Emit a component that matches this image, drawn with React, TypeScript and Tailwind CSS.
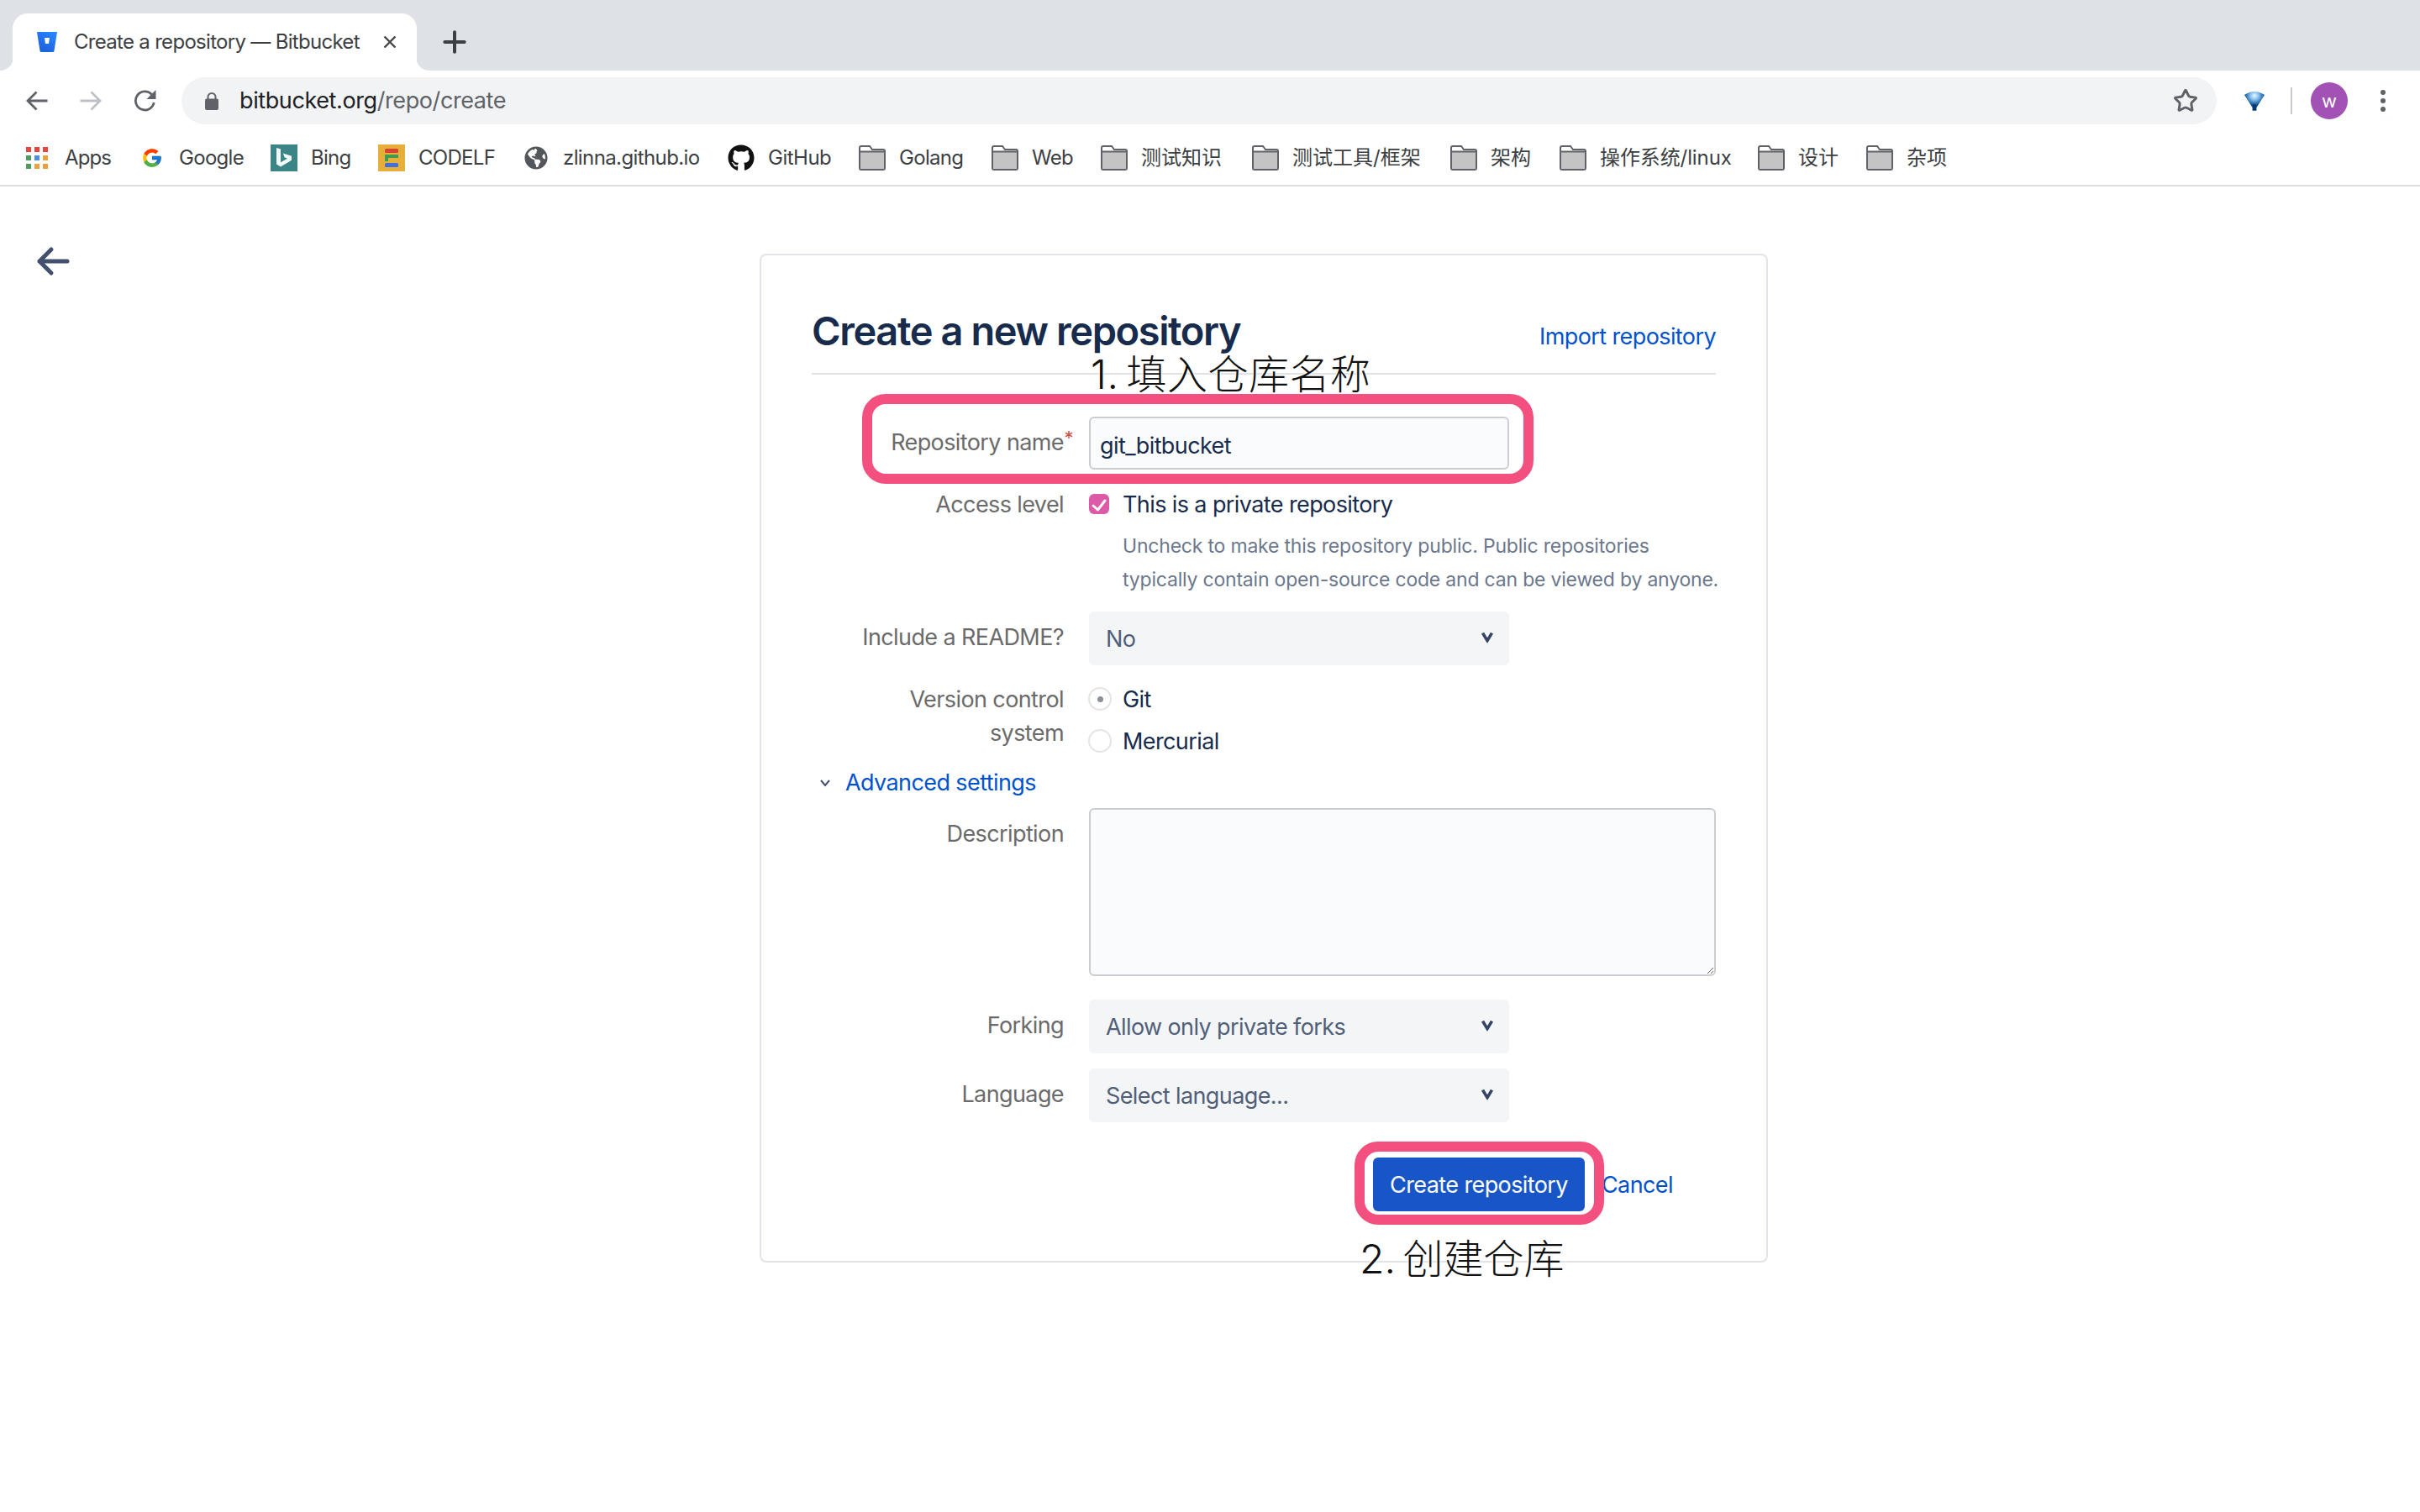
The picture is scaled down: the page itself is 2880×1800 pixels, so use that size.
import React from "react";
import { Star, Plus } from "lucide-react";
import { FcGoogle } from "react-icons/fc";
import { FaGithub, FaGlobeAmericas } from "react-icons/fa";

const Arrow = ({ color, flip }: { color: string; flip?: boolean }) => (
  <svg width="26" height="26" viewBox="0 0 26 26" className={flip ? "-scale-x-100 shrink-0" : "shrink-0"}>
    <path d="M25.5 13H2.5M12.5 2.5L2 13l10.5 10.5" fill="none" stroke={color} strokeWidth="2.8" />
  </svg>
);

const Reload = () => (
  <svg width="27" height="26" viewBox="0 0 27 26" className="shrink-0">
    <path d="M21.5 5.5A11 11 0 1 0 24.2 15" fill="none" stroke="#5f6368" strokeWidth="2.8" />
    <path d="M26.5 0v11h-11z" fill="#5f6368" />
  </svg>
);

const LockIcon = () => (
  <svg width="16" height="21" viewBox="0 0 16 21" className="shrink-0">
    <path d="M3.5 9V5.5a4.5 4.5 0 0 1 9 0V9" fill="none" stroke="#5f6368" strokeWidth="2" />
    <rect x="0" y="7.5" width="16" height="13.5" rx="2" fill="#5f6368" />
  </svg>
);

const Folder = () => (
  <svg width="32" height="30" viewBox="0 0 32 30" className="shrink-0">
    <path d="M1 27V3a2 2 0 0 1 2-2h10l3 4h13a2 2 0 0 1 2 2v20a2 2 0 0 1-2 2H3a2 2 0 0 1-2-2z" fill="#fff" stroke="#5f6368" strokeWidth="2" />
    <rect x="2" y="8" width="28" height="20" fill="#c4c4c4" />
    <path d="M2 7.5h28" stroke="#5f6368" strokeWidth="2" />
  </svg>
);

const AppsIcon = () => (
  <svg width="26" height="26" viewBox="0 0 26 26" className="shrink-0">
    {["#e8453c", "#e8453c", "#e8453c", "#4f9b5f", "#4a8fee", "#e9a23b", "#4f9b5f", "#e9a23b", "#e9a23b"].map((c, i) => (
      <rect key={i} x={(i % 3) * 10} y={Math.floor(i / 3) * 10} width="6" height="6" fill={c} />
    ))}
  </svg>
);

const BingIcon = () => (
  <svg width="32" height="32" viewBox="0 0 32 32" className="shrink-0">
    <rect width="32" height="32" fill="#3b8587" />
    <path d="M7 4l5 1.6v15.6l8-4.4-3.4-1.6-1.8-4.6L25 13.8v5L12 26.5l-5-3z" fill="#f2fbf9" />
  </svg>
);

const CodelfIcon = () => (
  <svg width="32" height="32" viewBox="0 0 32 32" className="shrink-0">
    <rect width="32" height="32" fill="#e8ae3a" />
    <rect x="8" y="5" width="16" height="5" rx="1.5" fill="#d8432f" />
    <path d="M8 12h16v4H12v4H8z" fill="#3f9b4f" />
    <rect x="8" y="22" width="16" height="5" rx="1.5" fill="#3f72d8" />
  </svg>
);

const bookmarks: { label: string; icon: React.ReactNode; cls: string }[] = [
  { label: "Apps", icon: <AppsIcon />, cls: "w-[137px] gap-[20px] tracking-[-0.9px]" },
  { label: "Google", icon: <FcGoogle size={26} className="shrink-0" />, cls: "w-[154px] gap-[19px] tracking-[-0.7px]" },
  { label: "Bing", icon: <BingIcon />, cls: "w-[128px] gap-[16px] tracking-[-0.7px]" },
  { label: "CODELF", icon: <CodelfIcon />, cls: "w-[174px] gap-[16px] tracking-[-0.7px]" },
  { label: "zlinna.github.io", icon: <FaGlobeAmericas size={28} color="#53575c" className="shrink-0" />, cls: "w-[242px] gap-[18px] tracking-[-0.6px]" },
  { label: "GitHub", icon: <FaGithub size={32} color="#111" className="shrink-0" />, cls: "w-[156px] gap-[16px] tracking-[-0.5px]" },
  { label: "Golang", icon: <Folder />, cls: "w-[158px] gap-[16px] tracking-[-0.7px]" },
  { label: "Web", icon: <Folder />, cls: "w-[130px] gap-[16px] tracking-[-0.7px]" },
  { label: "测试知识", icon: <Folder />, cls: "w-[180px] gap-[16px]" },
  { label: "测试工具/框架", icon: <Folder />, cls: "w-[236px] gap-[16px]" },
  { label: "架构", icon: <Folder />, cls: "w-[130px] gap-[16px]" },
  { label: "操作系统/linux", icon: <Folder />, cls: "w-[236px] gap-[16px] tracking-[-0.1px]" },
  { label: "设计", icon: <Folder />, cls: "w-[129px] gap-[16px]" },
  { label: "杂项", icon: <Folder />, cls: "w-[129px] gap-[16px]" },
];

const Chevron = () => (
  <svg width="16" height="14" viewBox="0 0 16 14" className="absolute right-[18px] top-1/2 -translate-y-[60%] pointer-events-none">
    <path d="M2.5 2l5.5 9 5.5-9" fill="none" stroke="#344563" strokeWidth="3.6" />
  </svg>
);

const Select = ({ value }: { value: string }) => (
  <div className="relative w-[500px] h-[64px]">
    <select
      defaultValue={value}
      className="appearance-none w-full h-full rounded-[6px] bg-[#f4f5f7] pl-[20px] pt-[2px] text-[27px] tracking-[-0.6px] text-[#505f79] outline-none"
    >
      <option>{value}</option>
    </select>
    <Chevron />
  </div>
);

const Label = ({ children, pt }: { children: React.ReactNode; pt: string }) => (
  <div className={`w-[300px] shrink-0 text-right text-[27px] leading-[40px] tracking-[-0.6px] text-[#6b6b6b] ${pt}`}>{children}</div>
);

const Radio = ({ on, label }: { on?: boolean; label: string }) => (
  <div className="flex items-center h-[40px]">
    <span className="w-[28px] h-[28px] -ml-[1px] rounded-full border-2 border-[#e4e5e8] bg-white flex items-center justify-center shrink-0">
      {on && <span className="w-[7px] h-[7px] rounded-full bg-[#8a8f98]" />}
    </span>
    <span className="ml-[13px] pt-[2px] text-[27px] tracking-[-0.6px] text-[#172b4d]">{label}</span>
  </div>
);

export default function App() {
  return (
    <div className="w-[2880px] h-[1800px] bg-white overflow-hidden font-['Inter','Noto_Sans_CJK_SC',sans-serif]">
      {/* tab strip */}
      <div className="h-[84px] bg-[#dee1e6] pl-[15px] pt-[16px] flex">
        <div className="relative w-[481px] h-[68px] bg-white rounded-t-[18px] flex items-center pl-[28px] pb-[1px]">
          <svg width="26" height="26" viewBox="0 0 26 26" className="shrink-0">
            <defs>
              <linearGradient id="bb" x1="1" y1="0.2" x2="0.5" y2="1">
                <stop offset="0" stopColor="#2684ff" />
                <stop offset="1" stopColor="#1e62dc" />
              </linearGradient>
            </defs>
            <path d="M1 1h24l-3.6 23a1.5 1.5 0 0 1-1.5 1H6.1a1.5 1.5 0 0 1-1.5-1z" fill="url(#bb)" />
            <path d="M10 8h6l-1 7h-4z" fill="#fff" />
          </svg>
          <span className="ml-[19px] w-[346px] text-[24px] tracking-[-0.7px] text-[#3c4043] whitespace-nowrap">Create a repository — Bitbucket</span>
          <svg width="16" height="14" viewBox="0 0 16 14" className="ml-[22px] shrink-0">
            <path d="M1.5 0.5l13 13M14.5 0.5l-13 13" fill="none" stroke="#45484d" strokeWidth="2.4" />
          </svg>
          <svg width="16" height="16" viewBox="0 0 16 16" className="absolute -left-[15px] bottom-0">
            <path d="M16 0v16H0a16 16 0 0 0 16-16z" fill="#fff" />
          </svg>
          <svg width="16" height="16" viewBox="0 0 16 16" className="absolute -right-[15px] bottom-0">
            <path d="M0 0v16h16A16 16 0 0 1 0 0z" fill="#fff" />
          </svg>
        </div>
        <Plus size={40} strokeWidth={2.4} color="#3c4043" className="ml-[25px] mt-[14px]" />
      </div>

      {/* toolbar */}
      <div className="h-[72px] flex items-start pt-[8px] bg-white">
        <div className="flex items-center h-[56px] w-[216px] shrink-0 pl-[31px] gap-[38px]">
          <Arrow color="#5f6368" />
          <Arrow color="#bdc1c6" flip />
          <Reload />
        </div>
        <div className="w-[2422px] h-[56px] rounded-full bg-[#f1f3f4] flex items-center pl-[28px] pr-[22px]">
          <LockIcon />
          <span className="ml-[25px] pt-[1px] text-[27px] tracking-[-0.4px] text-[#202124]">
            bitbucket.org<span className="text-[#5f6368]">/repo/create</span>
          </span>
          <Star size={30} strokeWidth={2.4} color="#5f6368" className="ml-auto" />
        </div>
        <div className="flex-1 relative h-[56px] flex items-center">
          <svg width="30" height="30" viewBox="0 0 30 30" className="ml-[30px]">
            <defs>
              <radialGradient id="fn" cx="0.5" cy="0.22" r="0.5">
                <stop offset="0" stopColor="#eaf6ff" />
                <stop offset="0.4" stopColor="#8cc3ef" />
                <stop offset="1" stopColor="#084f99" />
              </radialGradient>
            </defs>
            <path d="M0.5 8Q15-3 29.5 8L19 26q-4 5-8 0z" fill="#fff" />
            <path d="M3 8q12-8 24 0L17.5 23v3.5h-5V23z" fill="url(#fn)" />
            <path d="M13 19h4v7.5h-4z" fill="#0a3a6d" />
          </svg>
          <div className="ml-[28px] w-[2px] h-[32px] bg-[#c9cbcf]" />
          <div className="ml-[22px] w-[44px] h-[44px] rounded-full bg-[#a251b5] flex items-center justify-center text-white text-[22px]">w</div>
          <div className="ml-[39px] flex flex-col gap-[4px]">
            <span className="w-[6px] h-[6px] rounded-full bg-[#5f6368]" />
            <span className="w-[6px] h-[6px] rounded-full bg-[#5f6368]" />
            <span className="w-[6px] h-[6px] rounded-full bg-[#5f6368]" />
          </div>
        </div>
      </div>

      {/* bookmarks */}
      <div className="h-[66px] border-b-2 border-[#dadce0] flex items-center pl-[31px] pb-[1px]">
        {bookmarks.map((b) => (
          <div key={b.label} className={`flex items-center shrink-0 text-[24px] text-[#3c4043] whitespace-nowrap ${b.cls}`}>
            {b.icon}
            <span>{b.label}</span>
          </div>
        ))}
      </div>

      {/* page */}
      <div className="flex items-start">
        <div className="w-[904px] shrink-0 pl-[43px] pt-[71px]">
          <svg width="40" height="36" viewBox="0 0 40 36">
            <path d="M37 18H4M18 4L4 18l14 14" fill="none" stroke="#42526e" strokeWidth="5" strokeLinecap="round" strokeLinejoin="round" />
          </svg>
        </div>
        <div className="relative mt-[80px] w-[1200px] border-2 border-[#e2e3e6] rounded-[8px] px-[60px] pt-[54px] pb-[59px]">
          <div className="flex justify-between items-start border-b-2 border-[#e1e2e5] h-[88px]">
            <h1 className="text-[47px] leading-[72px] font-semibold tracking-[-1.4px] text-[#172b4d]">Create a new repository</h1>
            <a className="mt-[23px] text-[27px] leading-[40px] tracking-[-0.6px] text-[#0052cc]">Import repository</a>
          </div>

          <div className="flex gap-[30px] mt-[50px]">
            <Label pt="pt-[11px]">
              <span className="relative">
                Repository name
                <span className="absolute -right-[11px] -top-[9px] text-[22px] text-[#c9503f]">*</span>
              </span>
            </Label>
            <input
              readOnly
              value="git_bitbucket"
              className="w-[500px] h-[63px] bg-[#fafbfc] border-2 border-[#cbcdd1] rounded-[6px] pl-[11px] pt-[6px] text-[27px] tracking-[-0.6px] text-[#172b4d] outline-none"
            />
          </div>

          <div className="flex gap-[30px] mt-[21px]">
            <Label pt="pt-[1px]">Access level</Label>
            <div>
              <div className="flex items-center h-[40px]">
                <span className="w-[24px] h-[24px] rounded-[6px] bg-[#dc5aa6] flex items-center justify-center">
                  <svg width="24" height="24" viewBox="0 0 24 24">
                    <path d="M5 14l5.5 5L19 8" fill="none" stroke="#fff" strokeWidth="3" strokeLinecap="round" strokeLinejoin="round" />
                  </svg>
                </span>
                <span className="ml-[16px] pt-[2px] text-[27px] tracking-[-0.6px] text-[#172b4d]">This is a private repository</span>
              </div>
              <p className="mt-[10px] ml-[40px] text-[23px] leading-[40px] tracking-[-0.2px] text-[#6b778c] whitespace-nowrap">
                Uncheck to make this repository public. Public repositories
                <br />
                typically contain open-source code and can be viewed by anyone.
              </p>
            </div>
          </div>

          <div className="flex gap-[30px] mt-[18px]">
            <Label pt="pt-[11px]">Include a README?</Label>
            <Select value="No" />
          </div>

          <div className="flex gap-[30px] mt-[20px]">
            <Label pt="pt-[1px]">
              Version control
              <br />
              system
            </Label>
            <div className="flex flex-col gap-[10px]">
              <Radio on label="Git" />
              <Radio label="Mercurial" />
            </div>
          </div>

          <div className="flex items-center h-[40px] mt-[10px]">
            <svg width="16" height="12" viewBox="0 0 16 12" className="ml-[8px]">
              <path d="M3 3l5 6 5-6" fill="none" stroke="#42526e" strokeWidth="2" />
            </svg>
            <a className="ml-[16px] text-[27px] tracking-[-0.6px] text-[#0052cc]">Advanced settings</a>
          </div>

          <div className="flex gap-[30px] mt-[10px]">
            <Label pt="pt-[11px]">Description</Label>
            <textarea readOnly className="block w-[746px] h-[200px] bg-[#fafbfc] border-2 border-[#cbcdd1] rounded-[6px] outline-none" />
          </div>

          <div className="flex gap-[30px] mt-[28px]">
            <Label pt="pt-[11px]">Forking</Label>
            <Select value="Allow only private forks" />
          </div>

          <div className="flex gap-[30px] mt-[18px]">
            <Label pt="pt-[11px]">Language</Label>
            <Select value="Select language..." />
          </div>

          <div className="flex items-center mt-[42px] ml-[668px]">
            <button className="w-[252px] h-[64px] rounded-[6px] bg-[#1856c8] pt-[2px] text-white text-[27px] tracking-[-0.6px]">Create repository</button>
            <a className="ml-[20px] pt-[2px] text-[27px] tracking-[-0.6px] text-[#0052cc]">Cancel</a>
          </div>

          {/* annotations */}
          <div className="absolute left-[120px] top-[165px] w-[799px] h-[107px] border-[12px] border-[#f35080] rounded-[28px]" />
          <div className="absolute left-[706px] top-[1055px] w-[297px] h-[99px] border-[12px] border-[#f35080] rounded-[28px]" />
          <div className="absolute left-[392px] top-[110px] text-[48px] leading-[64px] text-[#111] whitespace-nowrap font-light tracking-[0.5px] [word-spacing:-5px] [text-shadow:0_0_3px_#fff,0_0_3px_#fff]">1. 填入仓库名称</div>
          <div className="absolute left-[712px] top-[1163px] text-[48px] leading-[64px] text-[#111] whitespace-nowrap font-light [word-spacing:-5px] [text-shadow:0_0_3px_#fff,0_0_3px_#fff]">2. 创建仓库</div>
        </div>
      </div>
    </div>
  );
}
